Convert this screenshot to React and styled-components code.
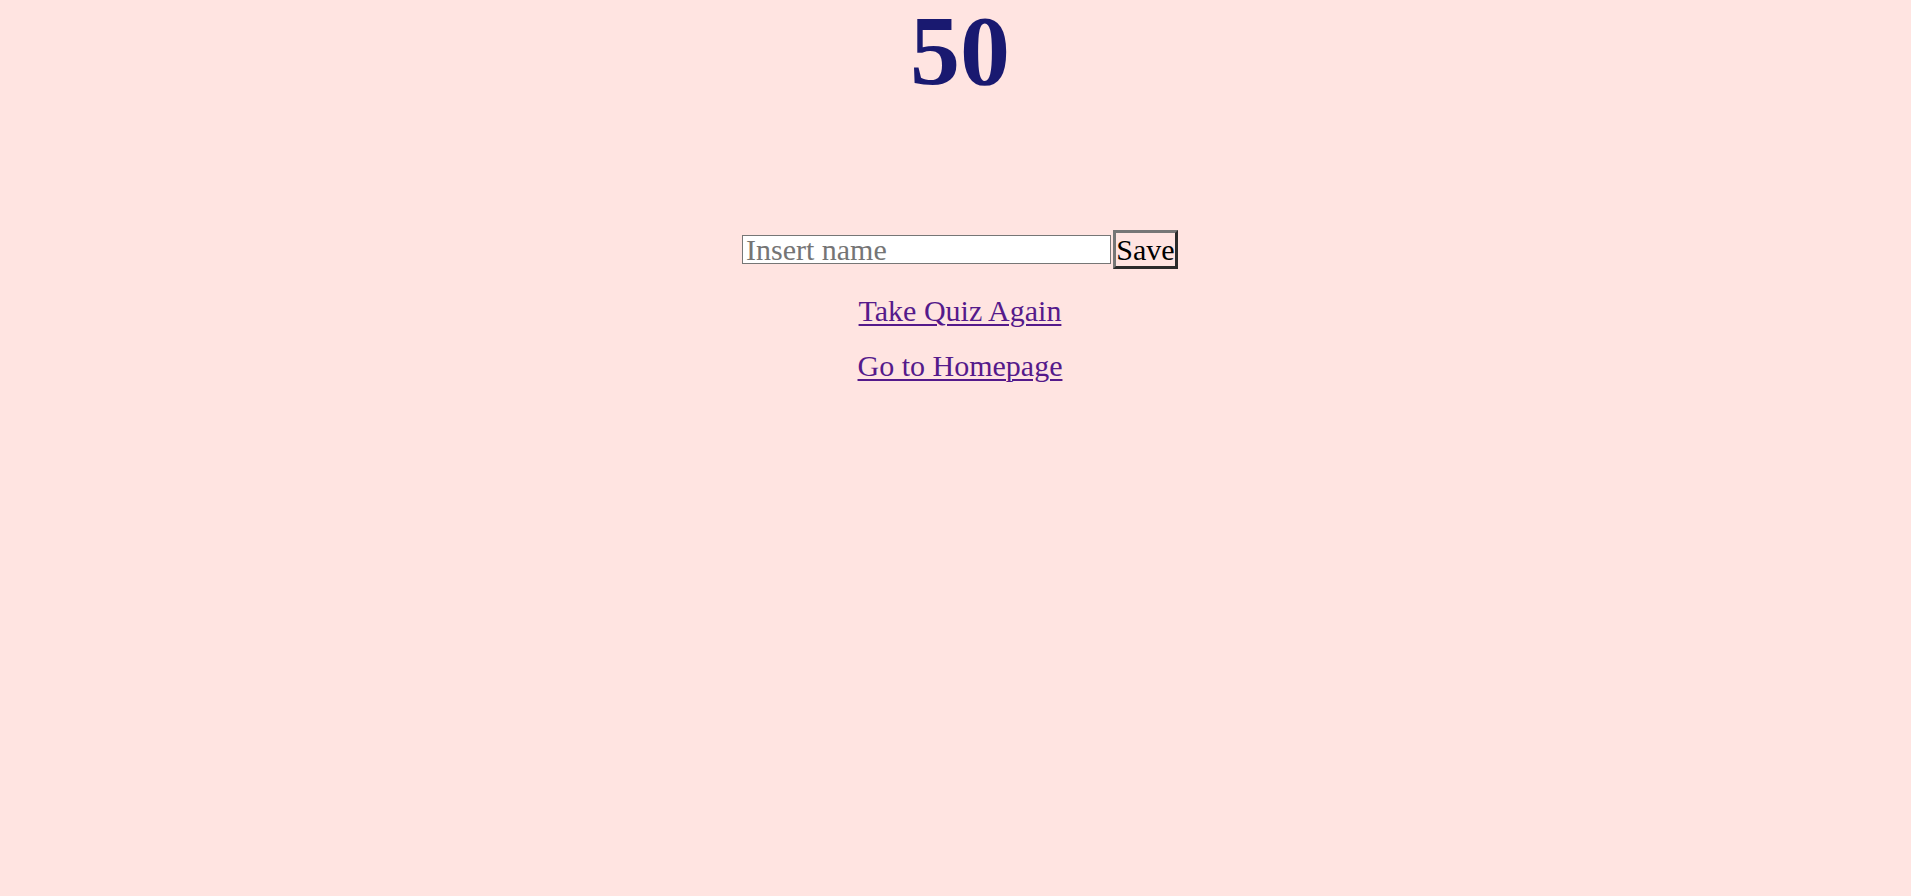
import React, { useState } from 'react';
import styled, { createGlobalStyle } from 'styled-components';

const GlobalStyle = createGlobalStyle`
  html, body {
    margin: 0;
    padding: 0;
    background: #ffe4e1;
    font-family: "Liberation Serif", "Times New Roman", serif;
  }
`;

const Page = styled.main`
  min-height: 896px;
  padding-left: 9px;
  display: flex;
  flex-direction: column;
  align-items: center;
`;

const Score = styled.h1`
  margin: 0;
  padding-top: 1px;
  font-size: 100px;
  line-height: 100px;
  font-weight: bold;
  color: #191970;
`;

const SaveForm = styled.form`
  margin-top: 129px;
  display: flex;
  align-items: center;
  gap: 2px;
`;

const NameInput = styled.input`
  box-sizing: border-box;
  width: 369px;
  height: 29px;
  padding: 0 3px;
  border: 1px solid #767676;
  background: #fff;
  font-family: "Liberation Serif", "Times New Roman", serif;
  font-size: 30px;
  color: #000;
  outline: none;

  &::placeholder {
    color: #757575;
  }
`;

const SaveButton = styled.button`
  box-sizing: border-box;
  width: 65px;
  height: 39px;
  padding: 0;
  border-style: solid;
  border-width: 3px;
  border-color: #767676 #2b2b2b #2b2b2b #767676;
  background: transparent;
  font-family: "Liberation Serif", "Times New Roman", serif;
  font-size: 30px;
  color: #000;
  cursor: pointer;
`;

const Links = styled.nav`
  margin-top: 24px;
  display: flex;
  flex-direction: column;
  align-items: center;
  gap: 20px;
`;

const PageLink = styled.a`
  font-size: 30px;
  line-height: 35px;
  color: #551a8b;
  text-decoration: underline;
  text-decoration-thickness: 2px;
  text-underline-offset: 3px;
`;

const App = () => {
  const [ name, setName ] = useState('');

  return (
    <>
      <GlobalStyle />
      <Page>
        <Score>50</Score>
        <SaveForm onSubmit={(e) => e.preventDefault()}>
          <NameInput
            type='text'
            placeholder='Insert name'
            value={name}
            onChange={(e) => setName(e.target.value)}
          />
          <SaveButton type='submit'>Save</SaveButton>
        </SaveForm>
        <Links>
          <PageLink href='#quiz'>Take Quiz Again</PageLink>
          <PageLink href='#home'>Go to Homepage</PageLink>
        </Links>
      </Page>
    </>
  );
};

export default App;
